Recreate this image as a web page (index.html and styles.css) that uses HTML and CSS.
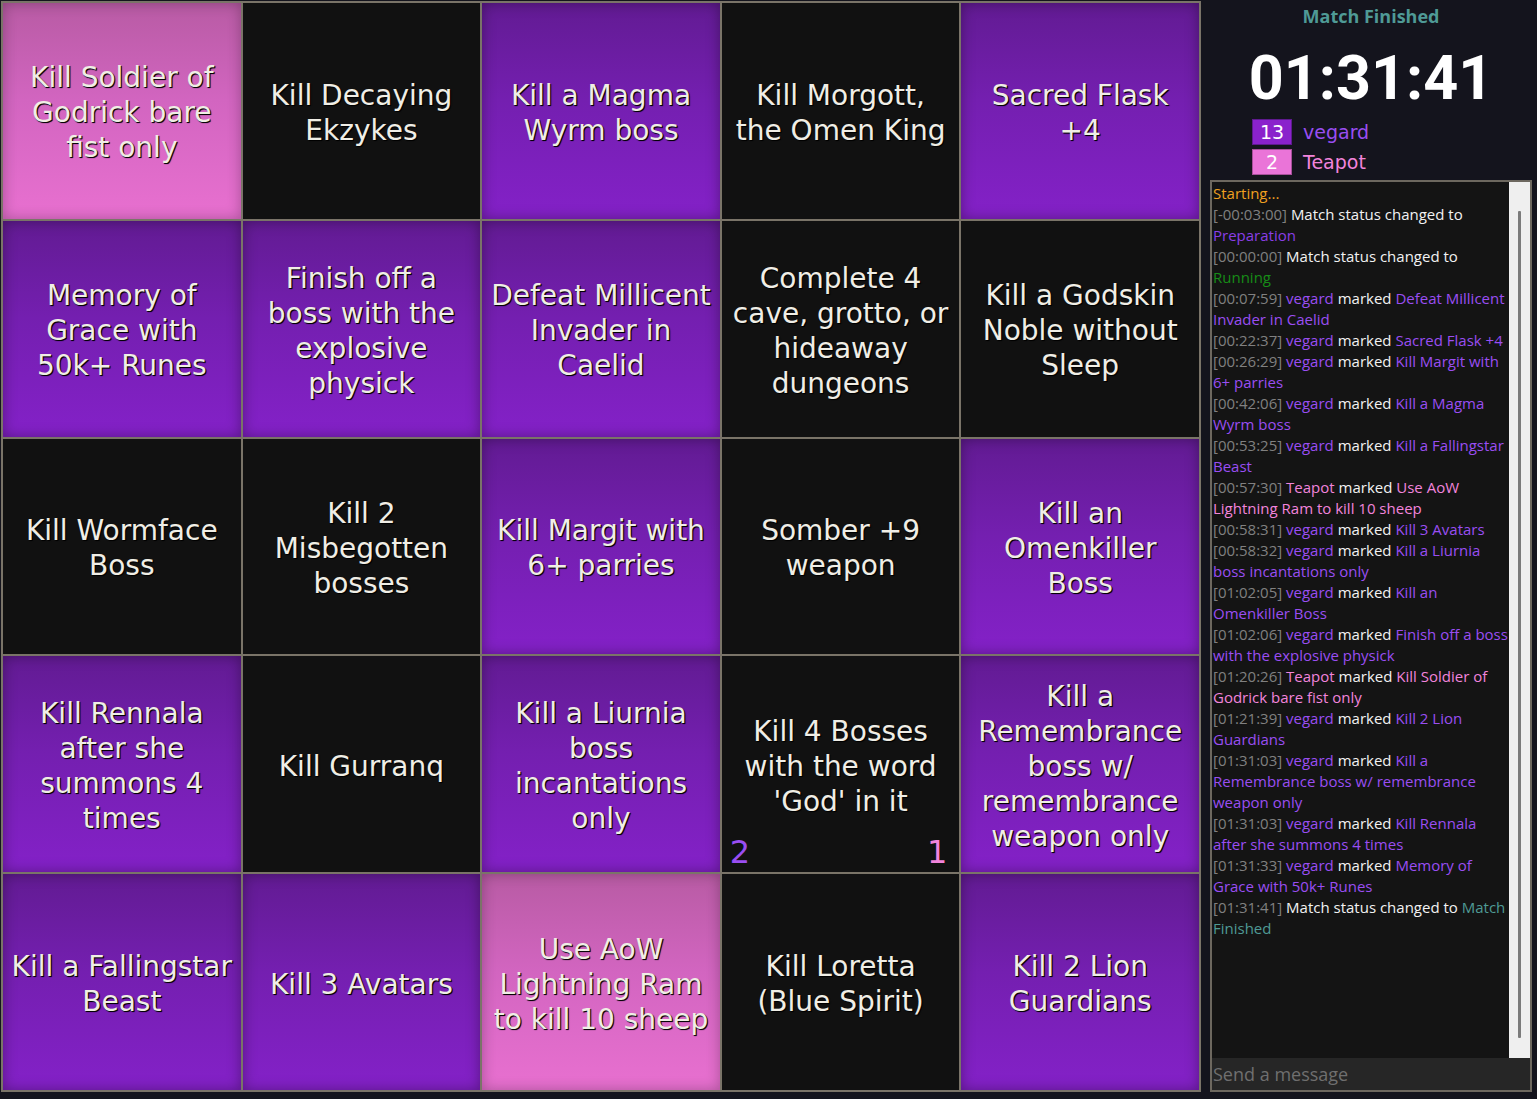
FILE: index.html
```html
<!DOCTYPE html>
<html lang="en">
<head>
<meta charset="utf-8">
<title>Bingo</title>
<link rel="stylesheet" href="styles.css">
</head>
<body>
<div class="app">
  <div class="board">
    <div class="cell pink"><span>Kill Soldier of<br>Godrick bare<br>fist only</span></div>
    <div class="cell black"><span>Kill Decaying<br>Ekzykes</span></div>
    <div class="cell purple"><span>Kill a Magma<br>Wyrm boss</span></div>
    <div class="cell black"><span>Kill Morgott,<br>the Omen King</span></div>
    <div class="cell purple"><span>Sacred Flask<br>+4</span></div>

    <div class="cell purple"><span>Memory of<br>Grace with<br>50k+ Runes</span></div>
    <div class="cell purple"><span>Finish off a<br>boss with the<br>explosive<br>physick</span></div>
    <div class="cell purple"><span>Defeat Millicent<br>Invader in<br>Caelid</span></div>
    <div class="cell black"><span>Complete 4<br>cave, grotto, or<br>hideaway<br>dungeons</span></div>
    <div class="cell black"><span>Kill a Godskin<br>Noble without<br>Sleep</span></div>

    <div class="cell black"><span>Kill Wormface<br>Boss</span></div>
    <div class="cell black"><span>Kill 2<br>Misbegotten<br>bosses</span></div>
    <div class="cell purple"><span>Kill Margit with<br>6+ parries</span></div>
    <div class="cell black"><span>Somber +9<br>weapon</span></div>
    <div class="cell purple"><span>Kill an<br>Omenkiller<br>Boss</span></div>

    <div class="cell purple"><span>Kill Rennala<br>after she<br>summons 4<br>times</span></div>
    <div class="cell black"><span>Kill Gurranq</span></div>
    <div class="cell purple"><span>Kill a Liurnia<br>boss<br>incantations<br>only</span></div>
    <div class="cell black"><span>Kill 4 Bosses<br>with the word<br>'God' in it</span><b class="count count-left c-purple">2</b><b class="count count-right c-pink">1</b></div>
    <div class="cell purple"><span>Kill a<br>Remembrance<br>boss w/<br>remembrance<br>weapon only</span></div>

    <div class="cell purple"><span>Kill a Fallingstar<br>Beast</span></div>
    <div class="cell purple"><span>Kill 3 Avatars</span></div>
    <div class="cell pink"><span>Use AoW<br>Lightning Ram<br>to kill 10 sheep</span></div>
    <div class="cell black"><span>Kill Loretta<br>(Blue Spirit)</span></div>
    <div class="cell purple"><span>Kill 2 Lion<br>Guardians</span></div>
  </div>

  <aside class="side">
    <div class="status">Match Finished</div>
    <div class="timer">01:31:41</div>
    <ul class="teams">
      <li class="team"><span class="score score-purple">13</span><span class="name c-purple">vegard</span></li>
      <li class="team"><span class="score score-pink">2</span><span class="name c-pink">Teapot</span></li>
    </ul>
    <div class="chat">
      <div class="chat-body">
        <div class="log">
          <div class="msg c-orange">Starting...</div>
          <div class="msg"><span class="ts">[-00:03:00]</span> Match status changed to <span class="c-prep">Preparation</span></div>
          <div class="msg"><span class="ts">[00:00:00]</span> Match status changed to <span class="c-green">Running</span></div>
          <div class="msg"><span class="ts">[00:07:59]</span> <span class="c-purple">vegard</span> marked <span class="c-purple">Defeat Millicent Invader in Caelid</span></div>
          <div class="msg"><span class="ts">[00:22:37]</span> <span class="c-purple">vegard</span> marked <span class="c-purple">Sacred Flask +4</span></div>
          <div class="msg"><span class="ts">[00:26:29]</span> <span class="c-purple">vegard</span> marked <span class="c-purple">Kill Margit with 6+ parries</span></div>
          <div class="msg"><span class="ts">[00:42:06]</span> <span class="c-purple">vegard</span> marked <span class="c-purple">Kill a Magma Wyrm boss</span></div>
          <div class="msg"><span class="ts">[00:53:25]</span> <span class="c-purple">vegard</span> marked <span class="c-purple">Kill a Fallingstar Beast</span></div>
          <div class="msg"><span class="ts">[00:57:30]</span> <span class="c-pink">Teapot</span> marked <span class="c-pink">Use AoW Lightning Ram to kill 10 sheep</span></div>
          <div class="msg"><span class="ts">[00:58:31]</span> <span class="c-purple">vegard</span> marked <span class="c-purple">Kill 3 Avatars</span></div>
          <div class="msg"><span class="ts">[00:58:32]</span> <span class="c-purple">vegard</span> marked <span class="c-purple">Kill a Liurnia boss incantations only</span></div>
          <div class="msg"><span class="ts">[01:02:05]</span> <span class="c-purple">vegard</span> marked <span class="c-purple">Kill an Omenkiller Boss</span></div>
          <div class="msg"><span class="ts">[01:02:06]</span> <span class="c-purple">vegard</span> marked <span class="c-purple">Finish off a boss with the explosive physick</span></div>
          <div class="msg"><span class="ts">[01:20:26]</span> <span class="c-pink">Teapot</span> marked <span class="c-pink">Kill Soldier of Godrick bare fist only</span></div>
          <div class="msg"><span class="ts">[01:21:39]</span> <span class="c-purple">vegard</span> marked <span class="c-purple">Kill 2 Lion Guardians</span></div>
          <div class="msg"><span class="ts">[01:31:03]</span> <span class="c-purple">vegard</span> marked <span class="c-purple">Kill a Remembrance boss w/ remembrance weapon only</span></div>
          <div class="msg"><span class="ts">[01:31:03]</span> <span class="c-purple">vegard</span> marked <span class="c-purple">Kill Rennala after she summons 4 times</span></div>
          <div class="msg"><span class="ts">[01:31:33]</span> <span class="c-purple">vegard</span> marked <span class="c-purple">Memory of Grace with 50k+ Runes</span></div>
          <div class="msg"><span class="ts">[01:31:41]</span> Match status changed to <span class="c-teal">Match Finished</span></div>
        </div>
        <div class="scrollbar"><div class="thumb"></div></div>
      </div>
      <input class="chat-input" type="text" placeholder="Send a message">
    </div>
  </aside>
</div>
</body>
</html>
```

FILE: styles.css
```css
* { box-sizing: border-box; }

html, body {
  margin: 0;
  padding: 0;
  background: #14141d;
  width: 1537px;
  height: 1099px;
  overflow: hidden;
}

.app {
  display: flex;
  align-items: flex-start;
  height: 1099px;
}

/* ---------- Board ---------- */
.board {
  margin: 1px 0 0 1px;
  width: 1200px;
  height: 1091px;
  flex: none;
  display: grid;
  grid-template-columns: repeat(5, 1fr);
  grid-template-rows: repeat(5, 1fr);
  border: 1px solid #7a7468;
}

.cell {
  position: relative;
  border: 1px solid #7a7468;
  display: flex;
  align-items: center;
  justify-content: center;
  text-align: center;
  padding: 4px 3px 0;
  font-family: "DejaVu Sans", Verdana, sans-serif;
  font-size: 28px;
  line-height: 35px;
  color: #f0eee6;
  text-shadow: 1px 1px 1px #000, 1px 1px 0 rgba(0, 0, 0, 0.6);
  white-space: nowrap;
  overflow: hidden;
}

.cell.black {
  background: #111111;
}

.cell.purple {
  background: linear-gradient(180deg, #621b93 0%, #741fb0 45%, #8421c8 100%);
  box-shadow: inset 0 0 14px rgba(0, 0, 0, 0.35);
}

.cell.pink {
  background: linear-gradient(180deg, #b85ba4 0%, #d265c0 45%, #e870d0 100%);
  box-shadow: inset 0 0 14px rgba(0, 0, 0, 0.28);
}

.count {
  position: absolute;
  bottom: 0;
  font-family: "DejaVu Sans", Verdana, sans-serif;
  font-weight: normal;
  font-size: 32px;
  line-height: 40px;
  text-shadow: none;
}
.count-left { left: 8px; }
.count-right { right: 12px; }

/* ---------- Side panel ---------- */
.side {
  flex: 1;
  height: 1099px;
  display: flex;
  flex-direction: column;
  padding: 0 5px 7px 9px;
}

.status {
  text-align: center;
  font-family: "Open Sans", "Noto Sans", sans-serif;
  font-weight: 700;
  font-size: 18px;
  line-height: 24px;
  padding-top: 4px;
  color: #4f9a96;
}

.timer {
  text-align: center;
  font-family: Roboto, "Open Sans", sans-serif;
  font-weight: 700;
  font-size: 61px;
  line-height: 62px;
  margin-top: 19px;
  color: #ffffff;
}

.teams {
  list-style: none;
  margin: 8px 0 3px;
  padding: 0 0 0 42px;
}

.team {
  display: flex;
  align-items: center;
  height: 30px;
}

.score {
  width: 40px;
  height: 26px;
  flex: none;
  display: flex;
  align-items: center;
  justify-content: center;
  font-family: "DejaVu Sans", Verdana, sans-serif;
  font-size: 19px;
  color: #fff;
  border: 1px solid;
}
.score-purple { background: #8a22cc; border-color: #5e1a8e; }
.score-pink { background: #ea74d8; border-color: #a8509a; }

.name {
  margin-left: 11px;
  font-family: "DejaVu Sans", Verdana, sans-serif;
  font-size: 19px;
}

.c-purple { color: #9a4ef2; }
.c-pink { color: #f284dc; }
.c-orange { color: #f0a020; }
.c-prep { color: #8a3ee6; }
.c-green { color: #178c17; }
.c-teal { color: #4f9a94; }

/* ---------- Chat ---------- */
.chat {
  flex: 1;
  display: flex;
  flex-direction: column;
  border: 2px solid #6d685f;
  min-height: 0;
}

.chat-body {
  flex: 1;
  display: flex;
  background: #141414;
  min-height: 0;
}

.log {
  flex: 1;
  padding: 1px 0 0 1px;
  font-family: "Open Sans", "Noto Sans", sans-serif;
  font-size: 15px;
  line-height: 21px;
  color: #f2f2f2;
}

.ts { color: #808080; }

.scrollbar {
  width: 21px;
  flex: none;
  background: #efefef;
  display: flex;
  justify-content: center;
  padding: 29px 0 20px;
}

.thumb {
  width: 3px;
  background: #7b7b7b;
  border-radius: 1px;
}

.chat-input {
  height: 32px;
  width: 100%;
  border: none;
  outline: none;
  background: #262626;
  color: #ddd;
  padding: 0 0 0 1px;
  font-family: "Open Sans", "Noto Sans", sans-serif;
  font-size: 18px;
}
.chat-input::placeholder { color: #6f6f6f; }
```
